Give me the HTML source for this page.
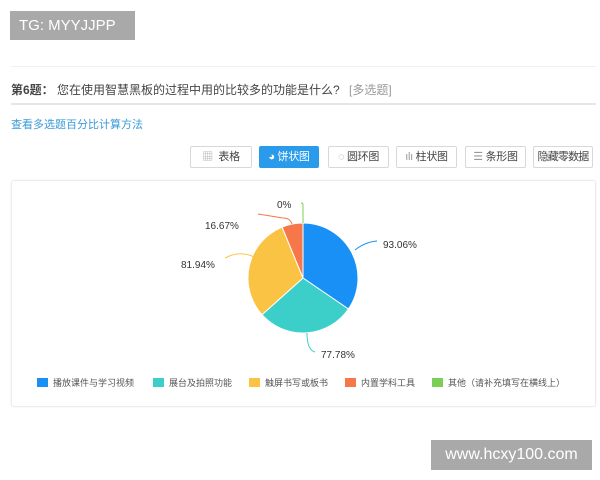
<!DOCTYPE html>
<html><head><meta charset="utf-8"><style>
body{margin:0;width:600px;height:480px;background:#fff;font-family:"Liberation Sans","Noto Sans CJK SC",sans-serif;position:relative;overflow:hidden;color:#333}
.a{position:absolute}
.btn{position:absolute;top:146px;height:22px;border:1px solid #d8d8d8;border-radius:2px;background:#fff;font-size:11px;line-height:21px;color:#444;box-sizing:border-box;text-align:center;white-space:nowrap;letter-spacing:-0.3px}
.lg{position:absolute;top:378px;font-size:9px;color:#555;line-height:11px;white-space:nowrap}
.lg i{display:inline-block;width:11px;height:9px;vertical-align:-1px;margin-right:5px}
</style></head><body>
<div class="a" style="left:10px;top:11px;width:125px;height:29px;background:#a9a9a9;color:#fff;font-size:15px;line-height:29px;text-indent:9px">TG: MYYJJPP</div>
<div class="a" style="left:11px;top:66px;width:585px;border-top:1px solid #f0f0f0"></div>
<div class="a" style="left:11px;top:82px;font-size:12px;line-height:16px;color:#444"><b>第6题：</b> 您在使用智慧黑板的过程中用的比较多的功能是什么? <span style="color:#999;margin-left:6px">[多选题]</span></div>
<div class="a" style="left:11px;top:103px;width:585px;border-top:2px solid #e6e6e6"></div>
<div class="a" style="left:11px;top:116px;font-size:11px;color:#3a9ad9">查看多选题百分比计算方法</div>
<div class="btn" style="left:190px;width:62px"><span style="color:#aaa">▦</span>&nbsp; 表格</div>
<div class="btn" style="left:259px;width:60px;background:#2a9bea;border-color:#2a9bea;color:#fff">◕ 饼状图</div>
<div class="btn" style="left:328px;width:61px"><span style="color:#999">◌</span> 圆环图</div>
<div class="btn" style="left:396px;width:61px"><span style="color:#999">ılı</span> 柱状图</div>
<div class="btn" style="left:465px;width:61px"><span style="color:#999">☰</span> 条形图</div>
<div class="btn" style="left:533px;width:60px;letter-spacing:-0.8px">隐藏零数据</div>
<div class="a" style="left:11px;top:180px;width:585px;height:227px;border:1px solid #ececec;border-radius:3px;box-sizing:border-box;box-shadow:0 0 2px #eee"></div>
<svg class="a" style="left:0;top:0" width="600" height="480">
<g stroke="#fff" stroke-width="1">
<path d="M303 278 L303 223 A55 55 0 0 1 348.4 309 Z" fill="#1890f5"/>
<path d="M303 278 L348.4 309 A55 55 0 0 1 262 314.7 Z" fill="#3ccfca"/>
<path d="M303 278 L262 314.7 A55 55 0 0 1 282.1 227.1 Z" fill="#fbc344"/>
<path d="M303 278 L282.1 227.1 A55 55 0 0 1 303 223 Z" fill="#f5774a"/>
</g>
<g fill="none" stroke-width="1">
<path d="M355 250 Q365 242 377 241" stroke="#1890f5"/>
<path d="M307 333 Q307 350 315 352" stroke="#3ccfca"/>
<path d="M254 257 Q240 250 225 258" stroke="#fbc344"/>
<path d="M292 224 Q290 218 283 218 L258 214" stroke="#f5774a"/>
<path d="M303 223 L303 205 Q303 203 301 203" stroke="#7ccf55"/>
</g>
<g font-size="10" fill="#333" font-family="Liberation Sans,sans-serif">
<text x="383" y="248">93.06%</text>
<text x="321" y="358">77.78%</text>
<text x="181" y="268">81.94%</text>
<text x="205" y="229">16.67%</text>
<text x="277" y="208">0%</text>
</g>
</svg>
<div class="lg" style="left:37px"><i style="background:#1890f5"></i>播放课件与学习视频</div>
<div class="lg" style="left:153px"><i style="background:#3ccfca"></i>展台及拍照功能</div>
<div class="lg" style="left:249px"><i style="background:#fbc344"></i>触屏书写或板书</div>
<div class="lg" style="left:345px"><i style="background:#f5774a"></i>内置学科工具</div>
<div class="lg" style="left:432px"><i style="background:#7ccf55"></i>其他（请补充填写在横线上）</div>
<div class="a" style="left:431px;top:440px;width:161px;height:30px;background:#a9a9a9;color:#fff;font-size:16px;line-height:30px;text-align:center">www.hcxy100.com</div>
</body></html>
